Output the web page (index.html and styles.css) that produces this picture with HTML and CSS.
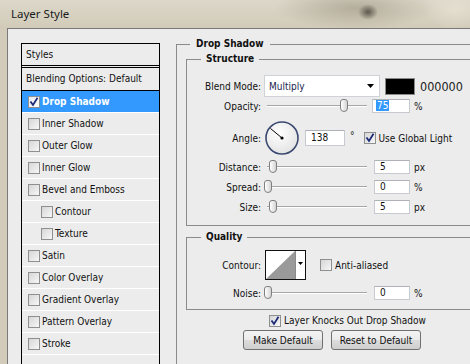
FILE: index.html
```html
<html>
  <head>
    <link rel="stylesheet" href="styles.css">
  </head>
  <body>
    <div class="titlebar">Layer Style</div>

    <div class="frame">
      <div class="dialog">

        <div class="styles-panel">
          <div class="styles-head">Styles</div>
          <div class="styles-blend">Blending Options: Default</div>
          <ul class="styles-list">
            <li class="style-item selected"><span class="check checked"><svg width="10" height="10" viewBox="0 0 10 10"><path d="M1.5 4.5 L4 8 L8.5 0.8" fill="none" stroke="#1d2a78" stroke-width="1.8"/></svg></span>Drop Shadow</li>
            <li class="style-item"><span class="check"></span>Inner Shadow</li>
            <li class="style-item"><span class="check"></span>Outer Glow</li>
            <li class="style-item"><span class="check"></span>Inner Glow</li>
            <li class="style-item"><span class="check"></span>Bevel and Emboss</li>
            <li class="style-item sub"><span class="check"></span>Contour</li>
            <li class="style-item sub"><span class="check"></span>Texture</li>
            <li class="style-item"><span class="check"></span>Satin</li>
            <li class="style-item"><span class="check"></span>Color Overlay</li>
            <li class="style-item"><span class="check"></span>Gradient Overlay</li>
            <li class="style-item"><span class="check"></span>Pattern Overlay</li>
            <li class="style-item"><span class="check"></span>Stroke</li>
            <li class="style-item"></li>
          </ul>
        </div>

        <div class="settings">
          <fieldset class="group group-main">
            <legend>Drop Shadow</legend>

            <fieldset class="group group-sub structure">
              <legend>Structure</legend>

              <div class="row row-blend">
                <span class="label">Blend Mode:</span>
                <div class="select">
                  <span>Multiply</span>
                  <svg width="7" height="4" viewBox="0 0 7 4"><path d="M0 0 H7 L3.5 4 Z" fill="#000"/></svg>
                </div>
                <span class="swatch"></span>
                <span class="hex">000000</span>
              </div>

              <div class="row row-opacity">
                <span class="label">Opacity:</span>
                <div class="slider"><span class="thumb" style="left: 76px"></span></div>
                <span class="field field-wide"><span class="selection">75</span></span>
                <span class="unit">%</span>
              </div>

              <div class="row row-angle">
                <span class="label">Angle:</span>
                <svg class="dial" width="34" height="34" viewBox="0 0 34 34">
                  <defs>
                    <radialGradient id="dialFill" cx="0.4" cy="0.35" r="0.7">
                      <stop offset="0" stop-color="#ffffff"/>
                      <stop offset="1" stop-color="#e2e2e2"/>
                    </radialGradient>
                  </defs>
                  <circle cx="17" cy="17" r="16" fill="url(#dialFill)" stroke="#3b4870" stroke-width="1.6"/>
                  <line x1="17" y1="17" x2="5.5" y2="7.5" stroke="#000" stroke-width="1"/>
                  <circle cx="17" cy="17" r="1.6" fill="#000"/>
                </svg>
                <span class="field field-angle">138</span>
                <span class="degree">°</span>
                <span class="check checked global"><svg width="10" height="10" viewBox="0 0 10 10"><path d="M1.5 4.5 L4 8 L8.5 0.8" fill="none" stroke="#1d2a78" stroke-width="1.8"/></svg></span>
                <span class="check-text">Use Global Light</span>
              </div>

              <div class="row row-distance">
                <span class="label">Distance:</span>
                <div class="slider"><span class="thumb" style="left: 5px"></span></div>
                <span class="field">5</span>
                <span class="unit">px</span>
              </div>

              <div class="row">
                <span class="label">Spread:</span>
                <div class="slider"><span class="thumb" style="left: 0px"></span></div>
                <span class="field">0</span>
                <span class="unit">%</span>
              </div>

              <div class="row">
                <span class="label">Size:</span>
                <div class="slider"><span class="thumb" style="left: 5px"></span></div>
                <span class="field">5</span>
                <span class="unit">px</span>
              </div>
            </fieldset>

            <fieldset class="group group-sub quality">
              <legend>Quality</legend>

              <div class="row row-contour">
                <span class="label">Contour:</span>
                <svg class="contour" width="41" height="30" viewBox="0 0 41 30">
                  <rect x="0.5" y="0.5" width="40" height="29" fill="#fff" stroke="#111"/>
                  <polygon points="1,29 30,1 30,29" fill="#9a9a9a"/>
                  <line x1="30.5" y1="1" x2="30.5" y2="29" stroke="#8a8a8a"/>
                  <path d="M33 12 H38 L35.5 15 Z" fill="#000"/>
                </svg>
                <span class="check antialias"></span>
                <span class="check-text">Anti-aliased</span>
              </div>

              <div class="row row-noise">
                <span class="label">Noise:</span>
                <div class="slider"><span class="thumb" style="left: 0px"></span></div>
                <span class="field">0</span>
                <span class="unit">%</span>
              </div>
            </fieldset>

            <div class="knock">
              <span class="check checked"><svg width="10" height="10" viewBox="0 0 10 10"><path d="M1.5 4.5 L4 8 L8.5 0.8" fill="none" stroke="#1d2a78" stroke-width="1.8"/></svg></span>
              <span class="check-text">Layer Knocks Out Drop Shadow</span>
            </div>

            <div class="buttons">
              <button class="btn btn-make">Make Default</button>
              <button class="btn btn-reset">Reset to Default</button>
            </div>
          </fieldset>
        </div>

      </div>
    </div>
  </body>
</html>
```

FILE: styles.css
```css
body {
  margin: 0;
  width: 470px;
  height: 364px;
  overflow: hidden;
  font-family: "DejaVu Sans Condensed", "DejaVu Sans", sans-serif;
  font-stretch: condensed;
  font-size: 10px;
  color: #111;
  background: #d4cebd;
}

.titlebar {
  height: 28px;
  padding-left: 11px;
  line-height: 28px;
  font-family: "Noto Sans", sans-serif;
  font-stretch: normal;
  font-size: 11.5px;
  color: #1b1b1b;
  background:
    radial-gradient(ellipse 10px 8px at 368px 12px, rgba(60, 56, 48, 0.75), transparent),
    radial-gradient(ellipse 80px 22px at 355px 8px, rgba(150, 142, 122, 0.55), transparent),
    radial-gradient(ellipse 30px 20px at 455px 10px, rgba(235, 230, 215, 0.6), transparent),
    linear-gradient(#dcd7c9, #d2cbb9);
}

.frame {
  display: flex;
  height: 336px;
  border-left: 7px solid #d2cbb9;
}

.dialog {
  flex: 1;
  display: flex;
  align-items: flex-start;
  background: #ececec;
  border-top: 1px solid #7a7a7a;
  border-left: 1px solid #7a7a7a;
}

/* styles list */

.styles-panel {
  flex: none;
  width: 137px;
  height: 340px;
  margin: 14px 0 0 13px;
  border: 1px solid #000;
}

.styles-head {
  height: 21px;
  line-height: 21px;
  padding-left: 4px;
  border-bottom: 3px double #000;
}

.styles-blend {
  height: 22px;
  line-height: 22px;
  padding-left: 4px;
  border-bottom: 1px solid #000;
}

.styles-list {
  margin: 0;
  padding: 0;
  list-style: none;
}

.style-item {
  display: flex;
  align-items: center;
  height: 21px;
  padding-left: 6px;
  border-bottom: 1px solid #fff;
}

.style-item .check {
  margin-right: 2px;
}

.style-item.sub {
  padding-left: 19px;
}

.style-item.selected {
  background: #3399ff;
  color: #fff;
  font-weight: bold;
}

.check {
  flex: none;
  display: inline-flex;
  align-items: center;
  justify-content: center;
  width: 12px;
  height: 12px;
  box-sizing: border-box;
  border: 1px solid #8e8f8f;
  background: linear-gradient(135deg, #d6d6d6, #f7f7f7);
}

.selected .check {
  background: linear-gradient(135deg, #e8e8e8, #ffffff);
}

/* settings */

.settings {
  flex: none;
  margin: 9px 0 0 16px;
}

.group {
  margin: 0;
  min-width: 0;
  border: 1px solid #8b8b8b;
}

.group > legend {
  font-weight: bold;
  line-height: 12px;
  padding: 0 5px;
}

.group-main {
  width: 320px;
  height: 340px;
  box-sizing: border-box;
  padding: 3px 0 0 9px;
  border-right: 0;
  border-bottom: 0;
}

.group-main > legend {
  margin-left: 4px;
  padding: 0 6px;
}

.group-sub > legend {
  margin-left: 14px;
}

.structure {
  padding: 10px 0 11px 0;
}

.quality {
  margin-top: 5px;
  padding: 7px 0 9px 0;
}

.row {
  display: flex;
  align-items: center;
  height: 14px;
  margin-top: 6px;
}

.row .label {
  flex: none;
  width: 74px;
  text-align: right;
}

.row-blend {
  height: 22px;
  margin-top: 0;
}

.row-opacity {
  margin-top: 2px;
}

.row-angle {
  height: 34px;
  margin-top: 8px;
}

.row-distance {
  margin-top: 5px;
}

.row-contour {
  height: 30px;
  margin-top: 0;
}

.select {
  flex: none;
  display: flex;
  align-items: center;
  justify-content: space-between;
  width: 116px;
  height: 22px;
  box-sizing: border-box;
  margin-left: 3px;
  padding: 0 5px 0 4px;
  border: 1px solid #cfd3d8;
  background: #fff;
  color: #1a2350;
}

.swatch {
  flex: none;
  width: 30px;
  height: 17px;
  box-sizing: border-box;
  margin-left: 5px;
  border: 1px solid #8a8a8a;
  background: #000;
}

.hex {
  margin-left: 5px;
  font-size: 12.5px;
  color: #222;
}

.slider {
  flex: none;
  position: relative;
  width: 103px;
  height: 14px;
  margin-left: 3px;
}

.slider::before {
  content: "";
  position: absolute;
  left: 3px;
  right: 0;
  top: 6px;
  height: 1px;
  background: #a6a6a6;
  border-bottom: 1px solid #fff;
}

.thumb {
  position: absolute;
  top: 0;
  width: 8px;
  height: 13px;
  box-sizing: border-box;
  border: 1px solid #7f7f7f;
  border-radius: 3px 3px 4px 4px;
  background: linear-gradient(90deg, #ffffff, #d4d4d4);
}

.field {
  flex: none;
  width: 36px;
  height: 14px;
  box-sizing: border-box;
  margin-left: 7px;
  padding-left: 5px;
  line-height: 12px;
  border: 1px solid #c7cbd0;
  border-top-color: #aeb2b8;
  background: #fff;
}

.field-wide {
  width: 38px;
  margin-left: 5px;
  padding-left: 3px;
}

.selection {
  background: #3399ff;
  color: #fff;
  padding: 0 1px;
}

.unit {
  margin-left: 4px;
}

.dial {
  flex: none;
  margin-left: 4px;
}

.field-angle {
  width: 40px;
  height: 16px;
  margin-left: 6px;
  line-height: 14px;
}

.degree {
  align-self: flex-start;
  margin: 9px 0 0 5px;
}

.global {
  margin-left: 9px;
}

.check-text {
  margin-left: 3px;
}

.contour {
  flex: none;
  margin-left: 4px;
}

.antialias {
  margin-left: 14px;
}

.knock {
  display: flex;
  align-items: center;
  height: 13px;
  margin-top: 4px;
  padding-left: 83px;
}

.buttons {
  display: flex;
  gap: 8px;
  margin-top: 3px;
  padding-left: 57px;
}

.btn {
  height: 20px;
  padding: 0;
  font: inherit;
  color: #111;
  border: 1px solid #707070;
  border-radius: 3px;
  background: linear-gradient(#f3f3f3 0%, #ebebeb 50%, #dcdcdc 50%, #cfcfcf 100%);
}

.btn-make {
  width: 80px;
}

.btn-reset {
  width: 90px;
}
```
